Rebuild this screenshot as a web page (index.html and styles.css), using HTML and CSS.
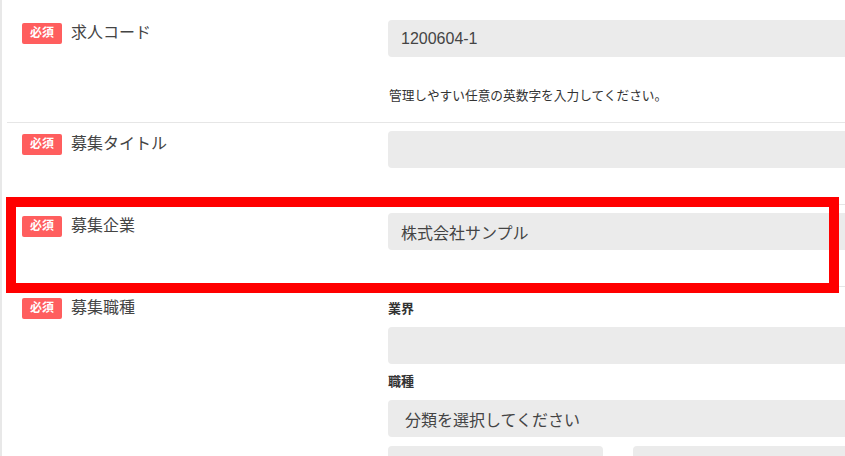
FILE: index.html
```html
<!DOCTYPE html>
<html lang="ja">
<head>
<meta charset="utf-8">
<title>求人フォーム</title>
<link rel="stylesheet" href="styles.css">
</head>
<body>
<div class="page">
  <div class="form">
    <div class="row row-first">
      <div class="label"><span class="badge">必須</span><span class="label-text">求人コード</span></div>
      <div class="field">
        <div class="input">1200604-1</div>
        <p class="help">管理しやすい任意の英数字を入力してください。</p>
      </div>
    </div>
    <div class="row">
      <div class="label"><span class="badge">必須</span><span class="label-text">募集タイトル</span></div>
      <div class="field">
        <div class="input"></div>
      </div>
    </div>
    <div class="row">
      <div class="label"><span class="badge">必須</span><span class="label-text">募集企業</span></div>
      <div class="field">
        <div class="input">株式会社サンプル</div>
      </div>
    </div>
    <div class="row">
      <div class="label"><span class="badge">必須</span><span class="label-text">募集職種</span></div>
      <div class="field field-stack">
        <div class="sublabel sublabel-first">業界</div>
        <div class="input"></div>
        <div class="sublabel">職種</div>
        <div class="input select">分類を選択してください</div>
        <div class="split">
          <div class="input"></div>
          <div class="input"></div>
        </div>
      </div>
    </div>
  </div>
  <div class="highlight"></div>
</div>
</body>
</html>
```

FILE: styles.css
```css
html, body {
  margin: 0;
  padding: 0;
  background: #ffffff;
  overflow: hidden;
}

body {
  font-family: "Liberation Sans", "Noto Sans CJK JP", sans-serif;
  color: #333333;
}

.page {
  position: relative;
  width: 1000px;
  min-height: 456px;
  box-sizing: border-box;
  border-left: 2px solid #e8e8e8;
  padding-left: 5px;
  padding-top: 11px;
}

.row {
  display: grid;
  grid-template-columns: 381px 1fr;
  border-top: 1px solid #e6e6e6;
  padding: 8px 0 36px;
}

.row-first {
  border-top-color: transparent;
  padding-bottom: 16px;
}

.label {
  display: flex;
  align-items: flex-start;
  gap: 9px;
  padding-left: 15px;
  padding-top: 3px;
}

.badge {
  display: inline-block;
  background: #ff5e5e;
  color: #ffffff;
  font-size: 12px;
  font-weight: bold;
  line-height: 21px;
  height: 21px;
  padding: 0 8px;
  border-radius: 2px;
}

.label-text {
  font-size: 16px;
  line-height: 19px;
  color: #444444;
}

.field {
  display: flex;
  flex-direction: column;
}

.field-stack {
  gap: 9px;
}

.input {
  height: 37px;
  box-sizing: border-box;
  background: #ebebeb;
  border-radius: 4px;
  padding: 0 13px;
  display: flex;
  align-items: center;
  font-size: 16px;
  color: #444444;
}

.select {
  padding-left: 17px;
}

.help {
  margin: 30px 0 0 1px;
  font-size: 12.7px;
  line-height: 19px;
  color: #333333;
}

.sublabel {
  font-size: 13px;
  font-weight: bold;
  line-height: 18px;
  color: #333333;
}

.sublabel-first {
  margin-top: 5px;
}

.split {
  display: grid;
  grid-template-columns: 215px 215px;
  column-gap: 30px;
}

.highlight {
  position: absolute;
  left: 4px;
  top: 197px;
  width: 833px;
  height: 96px;
  box-sizing: border-box;
  border: 10px solid #ff0000;
}
```
